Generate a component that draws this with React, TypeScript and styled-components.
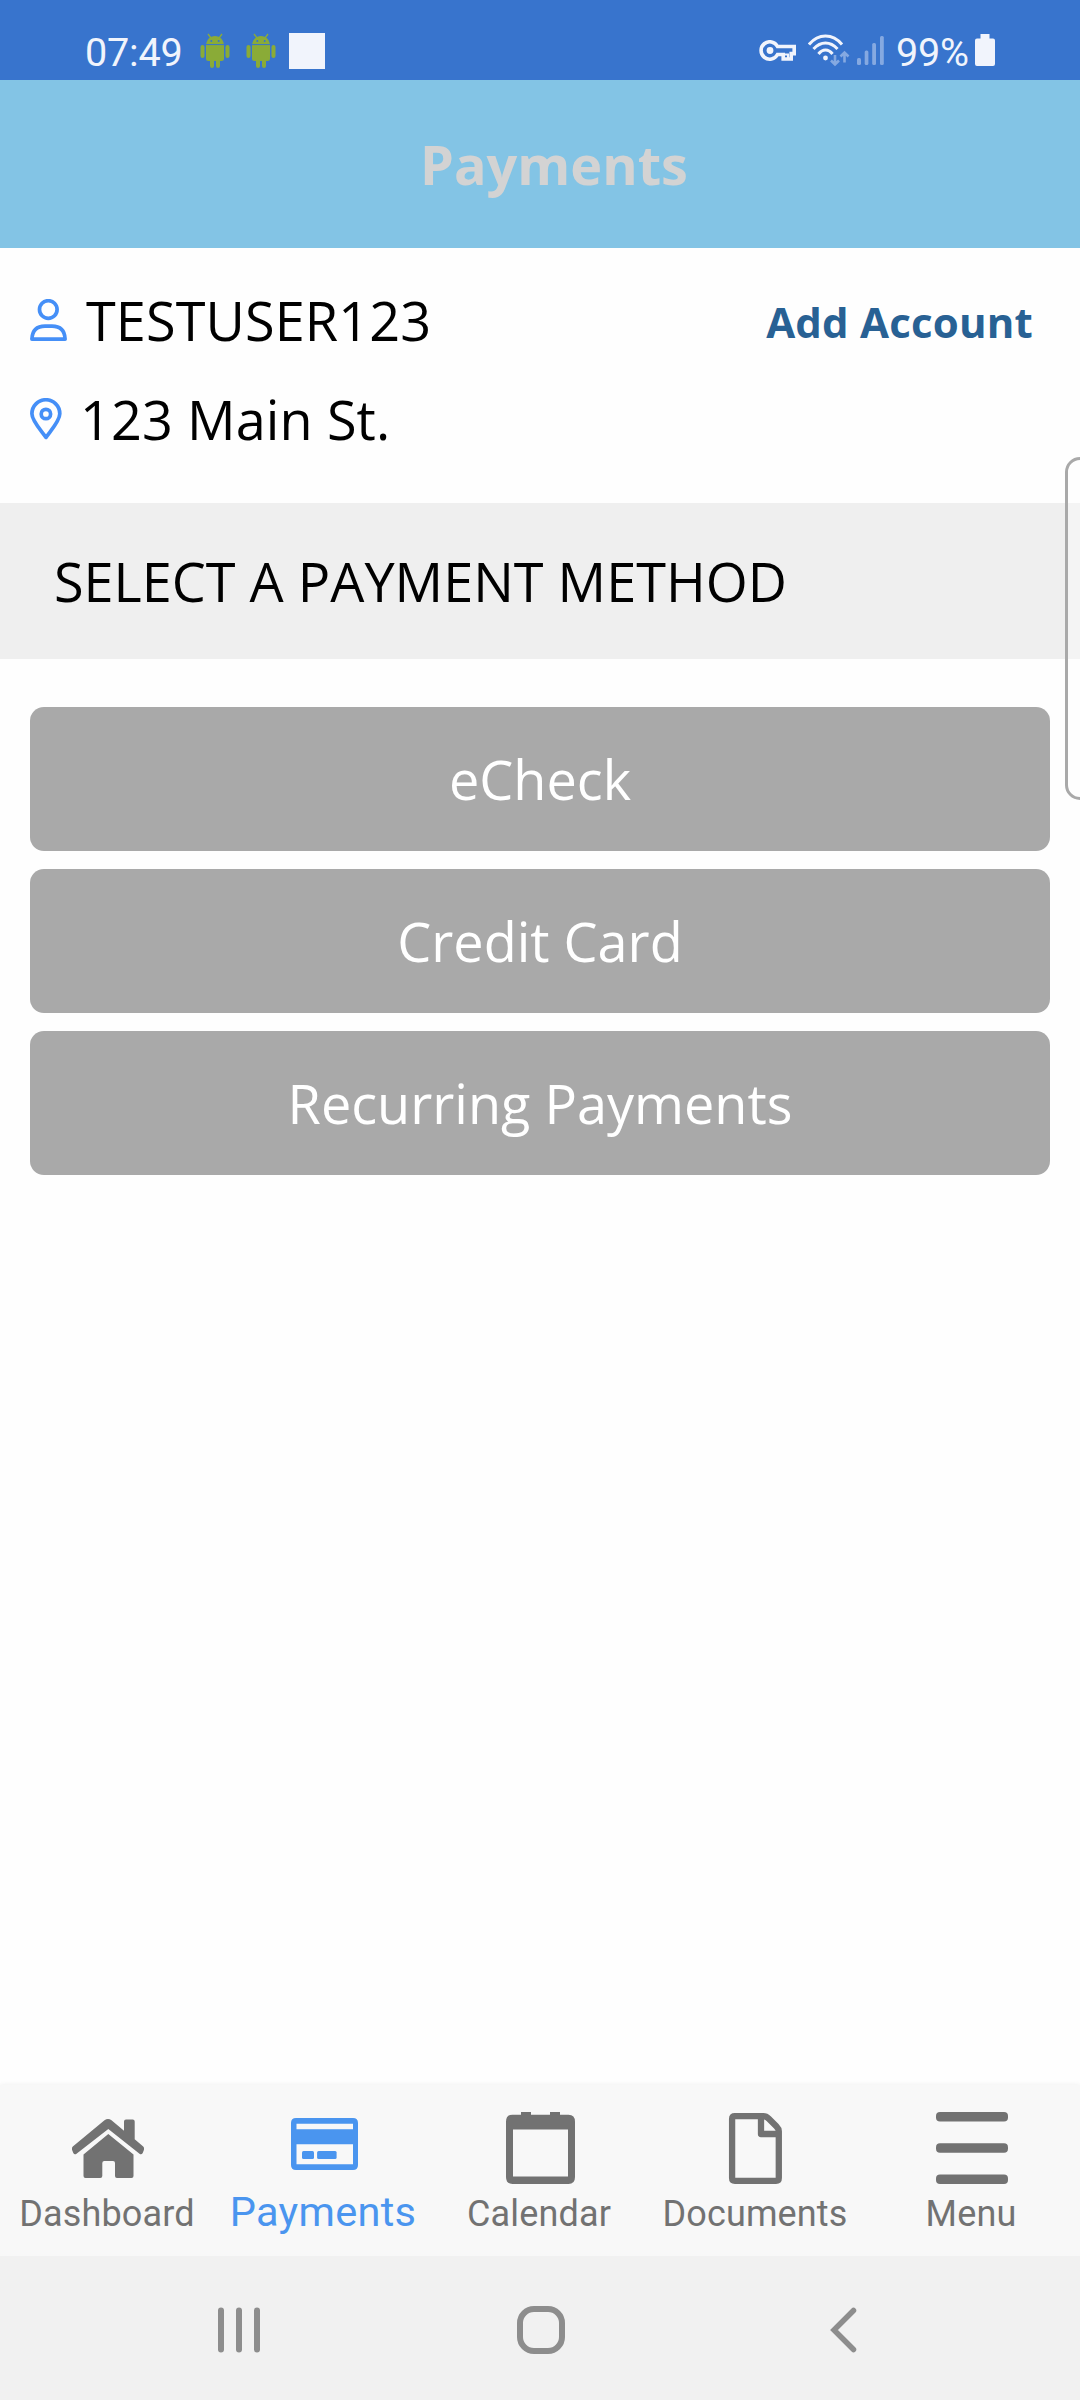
import React from "react";
import styled, { createGlobalStyle } from "styled-components";

const Global = createGlobalStyle`
  * { box-sizing: border-box; }
  body { margin: 0; background: #fff; }
  svg { display: block; flex: none; }
  button { border: 0; padding: 0; background: none; }
`;

const Screen = styled.div`
  position: relative;
  display: flex;
  flex-direction: column;
  width: 1080px;
  height: 2400px;
  overflow: hidden;
  background: #fefefe;
  font-family: "Open Sans", "Noto Sans", sans-serif;
  font-size: 54px;
  color: #000;
`;

const StatusBar = styled.div`
  display: flex;
  align-items: flex-start;
  justify-content: space-between;
  height: 80px;
  padding: 33px 85px 0 85px;
  background: #3874cd;
  color: #f1f4fc;
  font: 400 39.6px/40px Roboto, sans-serif;
`;

const StatusGroup = styled.div`
  display: flex;
  align-items: flex-start;
`;

const StatusText = styled.span<{ $width: number }>`
  display: block;
  width: ${(p) => p.$width}px;
  letter-spacing: -0.2px;
  white-space: nowrap;
`;

const Header = styled.header`
  height: 168px;
  padding-top: 47px;
  padding-left: 420px;
  background: #83c4e5;
  color: #d3d3d3;
  font-weight: 700;
  line-height: 74px;
`;

const Account = styled.section`
  display: flex;
  justify-content: space-between;
  height: 255px;
  padding: 35px 47px 0 30px;
`;

const Details = styled.div`
  display: flex;
  flex-direction: column;
  gap: 25px;
  letter-spacing: 0.1px;
`;

const Detail = styled.div<{ $gap: number }>`
  display: flex;
  align-items: center;
  gap: ${(p) => p.$gap}px;
  height: 74px;
  line-height: 74px;
  white-space: nowrap;
`;

const AddAccount = styled.button`
  height: 60px;
  margin-top: 9px;
  color: #286194;
  font: 700 42px/60px "Open Sans", sans-serif;
  letter-spacing: 0.2px;
`;

const SectionTitle = styled.h2`
  margin: 0;
  height: 156px;
  padding: 41px 0 0 54px;
  background: #efefef;
  font-size: 54px;
  font-weight: 400;
  line-height: 74px;
  white-space: nowrap;
`;

const Methods = styled.main`
  display: flex;
  flex: 1;
  flex-direction: column;
  gap: 18px;
  padding: 48px 30px 0;
`;

const Method = styled.button`
  height: 144px;
  border-radius: 14px;
  background: #a9a9a9;
  color: #fff;
  font: 400 54px/74px "Open Sans", sans-serif;
`;

const TabBar = styled.nav`
  display: grid;
  grid-template-columns: repeat(5, 216px);
  height: 171px;
  background: #f8f8f8;
  box-shadow: 0 0 5px rgba(0, 0, 0, 0.07);
`;

const Tab = styled.div<{ $active?: boolean }>`
  display: flex;
  flex-direction: column;
  align-items: center;
  gap: ${(p) => (p.$active ? 5 : 7)}px;
  padding-top: 27px;
  color: ${(p) => (p.$active ? "#4a95ef" : "#727272")};
  font: 400 ${(p) => (p.$active ? 41.5 : 36)}px/46px Roboto, sans-serif;
  letter-spacing: ${(p) => (p.$active ? 0.3 : 0.15)}px;
`;

const TabLabel = styled.span`
  margin-right: 2px;
  white-space: nowrap;
`;

const SystemNav = styled.div`
  display: grid;
  grid-template-columns: 301px 313px 30px;
  align-items: center;
  z-index: 1;
  height: 144px;
  padding: 4px 220px 0 216px;
  background: #f1f1f1;
`;

const EdgeHandle = styled.div`
  position: absolute;
  top: 457px;
  left: 1065px;
  width: 30px;
  height: 343px;
  border: 3px solid #a9a9a9;
  border-radius: 15px;
  background: rgba(255, 255, 255, 0.3);
`;

const Droid = () => (
  <svg width="46" height="46" viewBox="0 0 46 46" fill="#8aab37">
    <path d="M14 14C14 8 18 4 23 4s9 4 9 10z" transform="translate(0 -1)" />
    <path d="M16 1l3 4M30 1l-3 4" stroke="#8aab37" strokeWidth="1.3" />
    <circle cx="19.3" cy="8" r="1" fill="#3874cd" />
    <circle cx="26.7" cy="8" r="1" fill="#3874cd" />
    <path d="M14 12h18V25.500q0 2.500-2.500 2.500H28V33q0 2-2 2t-2-2v-5h-2V33q0 2-2 2t-2-2v-5h-1.500Q14 28 14 25.500z" />
    <path d="M14 11.600h18" stroke="#3874cd" strokeWidth="1" />
    <rect x="8.500" y="12" width="4" height="13" rx="2" />
    <rect x="33.500" y="12" width="4" height="13" rx="2" />
  </svg>
);

const Key = () => (
  <svg width="38" height="22" viewBox="0 0 38 22" fill="none" stroke="#f1f4fc">
    <path d="M18.500 6.500H35.200V13.600H32.200V19H24.200V14.500H18.500A8.700 8.700 0 1 1 18.500 6.500z" strokeWidth="3.600" />
    <path d="M24 14.500h6M29 14v5" strokeWidth="2" />
    <circle cx="11" cy="10.500" r="3.400" fill="#f1f4fc" stroke="none" />
  </svg>
);

const Wifi = () => (
  <svg width="42" height="34" viewBox="0 0 42 34" fill="none" strokeWidth="3">
    <g stroke="#f1f4fc">
      <path d="M1 10.500Q8 2 17.500 2T34 10.500" />
      <path d="M5.500 15Q11 9 17.500 9t12 6" />
      <path d="M10.500 20q3-4 7-4t7 4" />
    </g>
    <circle cx="17.500" cy="24" r="2.400" fill="#f1f4fc" />
    <g stroke="#85a9e1" strokeWidth="2.600">
      <path d="M27 21v9M23 26.500l4 4 4-4M36.500 28.500V19M32.500 22.500l4-4 4 4" />
    </g>
  </svg>
);

const Signal = () => (
  <svg width="27" height="30" viewBox="0 0 27 30" fill="#85a9e1">
    <rect x="0" y="22" width="4" height="7" rx="1.500" />
    <rect x="7.700" y="14.500" width="3.700" height="14.500" rx="1.500" />
    <rect x="15.200" y="7" width="3.800" height="22" rx="1.500" />
    <rect x="23" y="0" width="3.800" height="29" rx="1.500" />
  </svg>
);

const Battery = () => (
  <svg width="20" height="32" viewBox="0 0 20 32" fill="#f1f4fc">
    <path d="M5.500 0h9v4.500H18q2 0 2 2V30q0 2-2 2H2q-2 0-2-2V6.500q0-2 2-2h3.500z" />
  </svg>
);

const Slot = styled.span<{ $left?: number; $top?: number }>`
  margin-left: ${(p) => p.$left ?? 0}px;
  margin-top: ${(p) => p.$top ?? 0}px;
`;

const BlankNotification = styled.span`
  width: 36px;
  height: 36px;
  margin-left: 5px;
  background: #f1f4fc;
`;

const Person = () => (
  <svg width="37" height="42" viewBox="0 0 37 42" fill="none" stroke="#458ff7" strokeWidth="3.700">
    <circle cx="18.300" cy="10.500" r="8.800" />
    <path d="M1.900 40.100Q2.500 27.200 15 27.200h7Q34.500 27.200 35.100 40.100z" strokeLinejoin="round" />
  </svg>
);

const Pin = () => (
  <svg width="32" height="42" viewBox="0 0 32 42" fill="none" stroke="#458ff7" strokeWidth="3.700">
    <path d="M16 39.400C12 33.400 1.900 23 1.900 15.700a13.900 13.900 0 0 1 27.900 0C29.800 23 20 33.400 16 39.400z" strokeLinejoin="round" />
    <circle cx="15.900" cy="16" r="4.700" />
  </svg>
);

const House = () => (
  <svg width="72" height="72" viewBox="0 0 72 72" fill="#727272">
    <path d="M.8 34.500L32.500 8.300q3.500-2.600 7 0L52 18.700V9.500q0-2 2-2h6.700q2 0 2 2v17.800l8.500 7.200q1.500 1.500.5 4l-1 2.500q-1.200 2.200-3.200.7L36.300 17 4.500 41.700q-2 1.500-3.200-.7l-1-2.500q-1-2.500.5-4z" />
    <path d="M36.300 22L61.500 42.500V64q0 2-2 2H45q-2 0-2-2V51q0-2-2-2H32.300q-2 0-2 2v13q0 2-2 2H13.500q-2 0-2-2V42.500z" />
  </svg>
);

const Card = () => (
  <svg width="72" height="72" viewBox="-0.5 0 72 72" fill="#4a95ef">
    <path fillRule="evenodd" d="M7.500 6h57q5 0 5 5v42q0 5-5 5h-57q-5 0-5-5V11q0-5 5-5zM8 11.700v5.600h56.500v-5.600zm0 20.500v20h56.500v-20z" />
    <rect x="13.500" y="39" width="12" height="8" rx="1.500" />
    <rect x="28.600" y="39" width="19.500" height="8" rx="1.500" />
  </svg>
);

const CalendarIcon = () => (
  <svg width="72" height="72" viewBox="-2 0 72 72" fill="#727272">
    <path fillRule="evenodd" d="M6.500 2.700H15V0h10v2.700h19V0h10v2.700h8.500q6.500 0 6.500 7V65q0 7-6.500 7h-56Q0 72 0 65V9.700q0-7 6.500-7zM7 17.500v47h55v-47z" />
  </svg>
);

const DocumentIcon = () => (
  <svg width="72" height="72" viewBox="0.7 0 72 72" fill="none" stroke="#727272" strokeWidth="6.300" strokeLinejoin="round">
    <path d="M15 4.200H44q3 0 5.500 2.500L57 14.200q2.500 2.500 2.500 5V66q0 2.800-2.800 2.800H15.600q-2.800 0-2.800-2.800V7q0-2.800 2.800-2.800z" />
    <path d="M41.700 4.500v17.500h17.500" />
  </svg>
);

const MenuIcon = () => (
  <svg width="72" height="72" viewBox="0 0 72 72" fill="#727272">
    <rect y="0" width="72" height="9.500" rx="4" />
    <rect y="31.200" width="72" height="9.500" rx="4" />
    <rect y="62.500" width="72" height="9.500" rx="4" />
  </svg>
);

const tabs = [
  { label: "Dashboard", Icon: House },
  { label: "Payments", Icon: Card, active: true },
  { label: "Calendar", Icon: CalendarIcon },
  { label: "Documents", Icon: DocumentIcon },
  { label: "Menu", Icon: MenuIcon },
];

const methods = ["eCheck", "Credit Card", "Recurring Payments"];

export default function App() {
  return (
    <Screen>
      <Global />
      <StatusBar>
        <StatusGroup>
          <StatusText $width={107}>07:49</StatusText>
          <Droid />
          <Droid />
          <BlankNotification />
        </StatusGroup>
        <StatusGroup>
          <Slot $top={7}><Key /></Slot>
          <Slot $left={11} $top={1}><Wifi /></Slot>
          <Slot $left={7} $top={3}><Signal /></Slot>
          <Slot $left={12}><StatusText $width={79}>99%</StatusText></Slot>
          <Slot $top={1}><Battery /></Slot>
        </StatusGroup>
      </StatusBar>
      <Header>Payments</Header>
      <Account>
        <Details>
          <Detail $gap={19}><Person />TESTUSER123</Detail>
          <Detail $gap={18}><Pin />123 Main St.</Detail>
        </Details>
        <AddAccount>Add Account</AddAccount>
      </Account>
      <SectionTitle>SELECT A PAYMENT METHOD</SectionTitle>
      <Methods>
        {methods.map((name) => (
          <Method key={name}>{name}</Method>
        ))}
      </Methods>
      <TabBar>
        {tabs.map(({ label, Icon, active }) => (
          <Tab key={label} $active={active}>
            <Icon />
            <TabLabel>{label}</TabLabel>
          </Tab>
        ))}
      </TabBar>
      <SystemNav>
        <svg width="46" height="64" viewBox="0 0 46 64" stroke="#8d8d8d" strokeWidth="6" strokeLinecap="round">
          <path d="M5 12.500v39M23 12.500v39M41 12.500v39" />
        </svg>
        <svg width="48" height="48" viewBox="0 0 48 48" fill="none" stroke="#8d8d8d" strokeWidth="6">
          <rect x="3" y="3" width="42" height="42" rx="14" />
        </svg>
        <svg width="30" height="48" viewBox="0 0 30 48" fill="none" stroke="#8d8d8d" strokeWidth="5.500" strokeLinecap="round">
          <path d="M23.500 4.500L4 24l19.500 19.500" />
        </svg>
      </SystemNav>
      <EdgeHandle />
    </Screen>
  );
}
